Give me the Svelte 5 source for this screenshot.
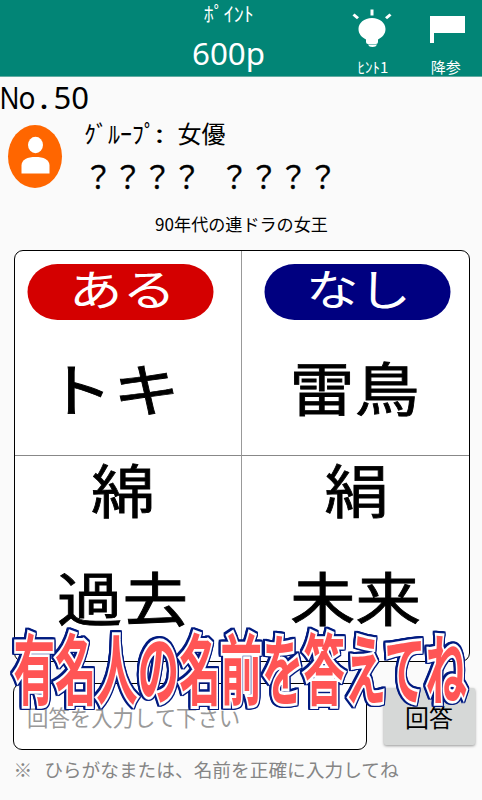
<script>
  let answer = $state('');

  const clues = [
    { label: 'ある', kind: 'aru', labelX: 54, labelW: 107, pillX: 12.5, words: [{ t: 'トキ', x: 31, y: 160.5, w: 134 }] },
    { label: 'なし', kind: 'nashi', labelX: 64, labelW: 105, pillX: 22.5, words: [{ t: '雷鳥', x: 47.5, y: 160, w: 130 }] },
    { words: [{ t: '綿', x: 76, y: 57, w: 64 }, { t: '過去', x: 42, y: 165, w: 131 }] },
    { words: [{ t: '絹', x: 82.5, y: 57, w: 64 }, { t: '未来', x: 48, y: 165, w: 131 }] }
  ];
</script>

{#snippet fit(t, x, y, w, size)}
  <text {x} {y} font-size={size} textLength={w} lengthAdjust="spacingAndGlyphs">{t}</text>
{/snippet}

<div class="screen">
  <header class="bar">
    <div class="points">
      <div class="points-label">ﾎﾟｲﾝﾄ</div>
      <svg class="points-value" width="74" height="36">
        {@render fit('600p', 1, 27, 73, 31)}
      </svg>
    </div>
    <div class="action hint">
      <svg width="42" height="50" viewBox="0 0 42 50" fill="#fff">
        <path d="M21 18c-8 0-13.500 5-13.500 11 0 5 3 8 7.500 10.500v2.500q0 2 2 2h8q2 0 2-2v-2.500c4.500-2.500 7.500-5.500 7.500-10.500 0-6-5.500-11-13.500-11z" />
        <path d="M17 44.500h9q-1 2.500-4.500 2.500T17 44.500zM19.500 9.500h3v6h-3zM1.500 15.500l2-2 4.500 3.700-2 2zM34 17.200l4.500-3.700 2 2-4.500 3.700z" />
      </svg>
      <span>ﾋﾝﾄ1</span>
    </div>
    <div class="action">
      <svg width="42" height="50" viewBox="0 0 42 50" fill="#fff">
        <path d="M5 16h35v17H9v10H5z" />
      </svg>
      <span>降参</span>
    </div>
  </header>

  <svg class="number" width="100" height="41">
    {@render fit('N', -0.5, 32, 20, 30)}
    {@render fit('o', 18.5, 32, 17, 30)}
    {@render fit('.', 39, 32, 10, 32)}
    {@render fit('50', 53.5, 32, 35.5, 30)}
  </svg>

  <section class="person">
    <svg class="avatar" width="54" height="63" viewBox="0 0 54 63">
      <ellipse cx="27" cy="31.500" rx="27" ry="31.500" fill="#f60" />
      <ellipse cx="27.500" cy="20" rx="7.500" ry="8.200" fill="#fff" />
      <path d="M13.500 48.500v-8c0-6 6-8.500 14-8.500s14 2.500 14 8.500v8z" fill="#fff" />
    </svg>
    <svg width="260" height="80">
      {@render fit('ｸﾞﾙｰﾌﾟ', 0, 24.5, 72, 24)}
      {@render fit(':', 71, 25, 9, 25)}
      {@render fit('女優', 93.5, 24.5, 48, 24)}
      <g class="name">
        {@render fit('？？？？', -0.5, 69.5, 118, 30)}
        {@render fit('？？？？', 135.5, 69.5, 118, 30)}
      </g>
    </svg>
  </section>

  <p class="clue-title">90年代の連ドラの女王</p>

  <main class="board">
    {#each clues as clue}
      <svg class="cell" width="228" height="206">
        {#if clue.label}
          <rect class={clue.kind} x={clue.pillX} y="13" width="186" height="56" rx="30" ry="28" />
          <g class="label">{@render fit(clue.label, clue.labelX, 55, clue.labelW, 43)}</g>
        {/if}
        <g class="word">
          {#each clue.words as word}
            {@render fit(word.t, word.x, word.y, word.w, 58)}
          {/each}
        </g>
      </svg>
    {/each}
  </main>

  <form class="answer" onsubmit={(e) => e.preventDefault()}>
    <input bind:value={answer} placeholder="回答を入力して下さい" />
    <button>回答</button>
  </form>
  <p class="note"><span>※</span>ひらがなまたは、名前を正確に入力してね</p>

  <svg class="banner" width="482" height="110">
    <text transform="translate(13.500 79) scale(0.538 1)" font-size="77">有名人の名前を答えてね</text>
  </svg>
</div>

<style>
  :global(body) {
    margin: 0;
    background: #fafafa;
  }

  .screen {
    position: relative;
    width: 482px;
    height: 800px;
    overflow: hidden;
    background: #fafafa;
    color: #000;
    font-family: "Noto Sans CJK JP", "Noto Sans", sans-serif;
  }

  svg {
    display: block;
    flex: none;
    overflow: visible;
  }

  .bar {
    display: flex;
    box-sizing: border-box;
    height: 77px;
    padding-left: 157px;
    background: #028576;
    border-bottom: 1px solid #62aba1;
    color: #fff;
  }

  .points {
    display: flex;
    flex-direction: column;
    align-items: center;
    width: 145px;
  }

  .points-label {
    padding-left: 1px;
    font-size: 20px;
    line-height: 27px;
    height: 38px;
  }

  .points-value {
    fill: #fff;
    font-family: "Noto Sans", sans-serif;
  }

  .action {
    display: flex;
    flex-direction: column;
    align-items: center;
    width: 74px;
    font-size: 15px;
    line-height: 34px;
  }

  .hint {
    margin-left: 36px;
    margin-right: 1px;
  }

  .hint span {
    padding-left: 2px;
  }

  .number {
    font-family: "Noto Sans", sans-serif;
  }

  .person {
    display: flex;
    height: 91px;
    padding-left: 8px;
    gap: 22px;
  }

  .avatar {
    margin-top: 7px;
  }

  .name {
    stroke: #000;
    stroke-width: 0.3px;
  }

  .clue-title {
    margin: 0;
    padding: 3px 0 0 1px;
    height: 38px;
    text-align: center;
    font-size: 17.1px;
    line-height: 24px;
  }

  .board {
    display: grid;
    grid-template: 205px 204px / 227px 227px;
    box-sizing: border-box;
    width: 456px;
    height: 412px;
    margin-left: 13.5px;
    border: 1.5px solid #000;
    border-radius: 9px;
    background: #fff;
  }

  .cell {
    width: 100%;
    height: 100%;
    box-sizing: border-box;
  }

  .cell:nth-child(odd) {
    border-right: 1px solid #999;
  }

  .cell:nth-child(-n + 2) {
    border-bottom: 1px solid #888;
  }

  .aru {
    fill: #d40000;
  }

  .nashi {
    fill: #000080;
  }

  .label {
    fill: #fff;
  }

  .word {
    stroke: #000;
    stroke-width: 0.8px;
  }

  .answer {
    display: flex;
    align-items: flex-start;
    height: 67px;
    margin: 21px 0 0 13px;
    gap: 17px;
  }

  input {
    box-sizing: border-box;
    width: 354px;
    height: 67px;
    padding: 0 12px 0 13px;
    border: 1px solid #000;
    border-radius: 9px;
    background: #fff;
    font: 21.4px "Noto Sans CJK JP", sans-serif;
  }

  input::placeholder {
    color: #999;
  }

  button {
    width: 91px;
    height: 57px;
    margin-top: 5px;
    padding: 0 1px 0 0;
    border: 0;
    border-radius: 2px;
    background: #d6d8d7;
    box-shadow: 0 1px 3px rgba(0, 0, 0, 0.4);
    font: 24px "Noto Sans CJK JP", sans-serif;
    color: #000;
  }

  .note {
    display: flex;
    gap: 12px;
    margin: 5px 0 0 13.5px;
    font-size: 18.7px;
    line-height: 28px;
    color: #858585;
    white-space: nowrap;
  }

  .banner {
    position: absolute;
    left: 0;
    top: 620px;
    font-weight: 700;
    filter: drop-shadow(1.5px 0 0 #001a80) drop-shadow(-1.5px 0 0 #001a80) drop-shadow(0 1.5px 0 #001a80)
      drop-shadow(0 -1.5px 0 #001a80);
  }

  .banner text {
    fill: #f55;
    stroke: #fff;
    stroke-width: 4.6px;
    stroke-linejoin: miter;
    paint-order: stroke;
    vector-effect: non-scaling-stroke;
  }
</style>
